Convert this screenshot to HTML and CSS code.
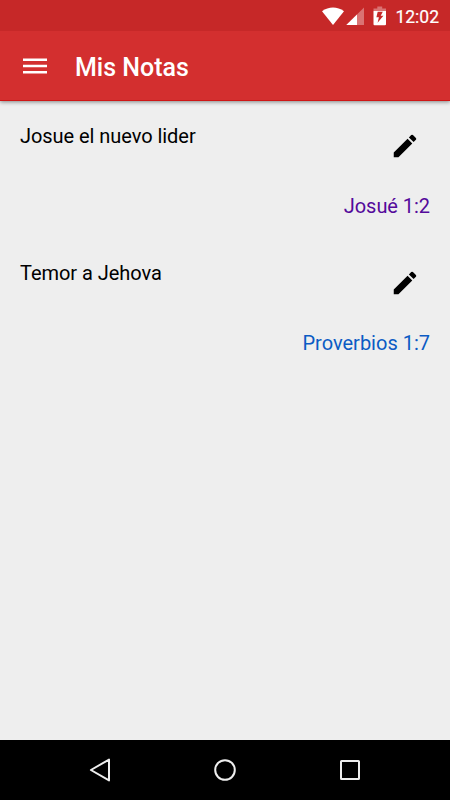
FILE: index.html
```html
<!DOCTYPE html>
<html lang="es">
<head>
<meta charset="utf-8">
<title>Mis Notas</title>
<link rel="stylesheet" href="styles.css">
</head>
<body>
<div class="screen">
  <div class="status-bar">
    <svg class="wifi" width="24" height="20" viewBox="0 0 24 20"><path d="M1 5.300C7.600.300 16.400.300 23 5.300L12 19z"/></svg>
    <svg class="signal" width="18" height="20" viewBox="0 0 18 20"><path class="dim" d="M18 1.500v17.500H.3z"/><path d="M11 8.400v10.600H.3z"/></svg>
    <svg class="battery" width="14" height="20" viewBox="0 0 14 20"><path class="dim" d="M4.300.500h4.900v2H13v2.500H.5V2.500h3.800z"/><path fill-rule="evenodd" d="M.5 5H13v13.200q0 1-1 1H1.500q-1 0-1-1zM4.700 5.700L3.400 11.300h2.500L4.600 16.800l5.800-7H7.700l2.100-4.100z"/></svg>
    <span class="clock">12:02</span>
  </div>
  <header class="app-bar">
    <svg class="menu" width="30" height="30" viewBox="0 0 24 24"><path d="M2.400 18h19.200v-2H2.400v2zm0-5h19.200v-2H2.400v2zm0-7v2h19.200V6H2.400z"/></svg>
    <h1 class="title">Mis Notas</h1>
  </header>
  <main class="notes">
    <article class="note">
      <div class="note-head">
        <h2 class="note-title">Josue el nuevo lider</h2>
        <svg class="edit" width="30" height="30" viewBox="0 0 24 24"><path d="M3 17.250V21h3.750L17.810 9.940l-3.750-3.750L3 17.250zM20.710 7.040a1 1 0 0 0 0-1.410l-2.340-2.340a1 1 0 0 0-1.410 0l-1.830 1.830 3.750 3.750 1.830-1.830z"/></svg>
      </div>
      <a class="verse visited">Josué 1:2</a>
    </article>
    <article class="note">
      <div class="note-head">
        <h2 class="note-title">Temor a Jehova</h2>
        <svg class="edit" width="30" height="30" viewBox="0 0 24 24"><path d="M3 17.250V21h3.750L17.810 9.940l-3.750-3.750L3 17.250zM20.710 7.040a1 1 0 0 0 0-1.410l-2.340-2.340a1 1 0 0 0-1.410 0l-1.830 1.830 3.750 3.750 1.830-1.830z"/></svg>
      </div>
      <a class="verse">Proverbios 1:7</a>
    </article>
  </main>
  <nav class="nav-bar">
    <svg width="30" height="30" viewBox="0 0 30 30"><path d="M5.900 15L24 4.600v20.800z"/></svg>
    <svg width="30" height="30" viewBox="0 0 30 30"><circle cx="15" cy="15" r="9.800"/></svg>
    <svg width="30" height="30" viewBox="0 0 30 30"><rect x="6" y="6" width="18" height="18" rx=".5"/></svg>
  </nav>
</div>
</body>
</html>
```
FILE: styles.css
```css
* {
  box-sizing: border-box;
}

body {
  margin: 0;
  font-family: Roboto, sans-serif;
}

svg {
  display: block;
  flex: none;
}

.screen {
  display: flex;
  flex-direction: column;
  width: 450px;
  height: 800px;
  background: #eee;
  overflow: hidden;
}

.status-bar {
  position: relative;
  z-index: 1;
  display: flex;
  align-items: center;
  justify-content: flex-end;
  height: 31px;
  padding-right: 11px;
  background: #c62828;
  color: #fff;
  fill: #fff;
}

.signal {
  margin-left: 1px;
}

.battery {
  margin: 0 8px 0 9px;
}

.dim {
  opacity: 0.35;
}

.clock {
  font-size: 17.5px;
  line-height: 20px;
  padding-top: 2px;
  -webkit-text-stroke: 0.2px #fff;
}

.app-bar {
  position: relative;
  display: flex;
  align-items: center;
  gap: 25px;
  height: 70px;
  padding: 0 20px;
  background: #d32f2f;
  border-bottom: 1px solid #cf1515;
  box-shadow: 0 1px 4px rgba(0, 0, 0, 0.45);
  color: #fff;
  fill: #fff;
}

.title {
  margin: 4px 0 0;
  font-size: 25px;
  font-weight: 500;
  line-height: 30px;
}

.notes {
  flex: 1;
  padding-top: 20px;
}

.note {
  display: flex;
  flex-direction: column;
  height: 137px;
  padding: 0 20px;
}

.note-head {
  display: flex;
  justify-content: space-between;
  height: 70px;
  padding-right: 10px;
}

.note-title {
  margin: 0;
  font-size: 20px;
  font-weight: 400;
  letter-spacing: -0.05px;
  line-height: 30px;
  color: #000;
}

.edit {
  margin-top: 10px;
}

.verse {
  align-self: flex-end;
  font-size: 20px;
  line-height: 30px;
  color: #0b5bc4;
}

.visited {
  letter-spacing: -0.05px;
  color: #540a9b;
}

.nav-bar {
  display: flex;
  justify-content: center;
  align-items: center;
  gap: 95px;
  height: 60px;
  background: #000;
  fill: none;
  stroke: #eee;
  stroke-width: 2;
  stroke-linejoin: round;
}
```
